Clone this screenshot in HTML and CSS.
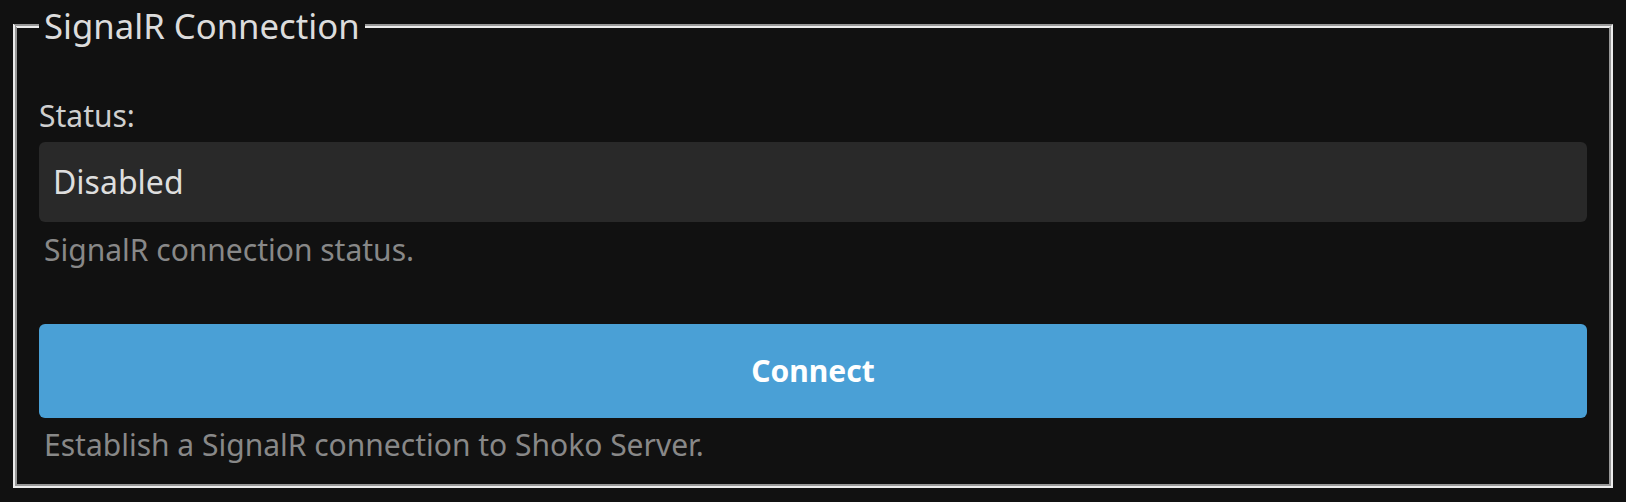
FILE: index.html
```html
<!DOCTYPE html>
<html lang="en">
<head>
<meta charset="utf-8">
<title>SignalR Connection</title>
<link rel="stylesheet" href="styles.css">
</head>
<body>
<fieldset class="panel">
  <legend class="panel-title">SignalR Connection</legend>
  <div class="field">
    <label class="field-label">Status:</label>
    <div class="field-value">Disabled</div>
    <div class="field-help">SignalR connection status.</div>
  </div>
  <div class="field field-action">
    <button class="btn-primary" type="button">Connect</button>
    <div class="field-help">Establish a SignalR connection to Shoko Server.</div>
  </div>
</fieldset>
</body>
</html>
```

FILE: styles.css
```css
html, body {
  margin: 0;
  background: #111111;
}
body {
  padding: 2px 13px 14px 13px;
  font-family: "Noto Sans", sans-serif;
  color: #dcdcdc;
}
.panel {
  margin: 0;
  border: 4px groove #ececec;
  border-left-style: ridge;
  padding: 45.5px 22px 19px 22px;
  min-width: 0;
}
.panel-title {
  font-size: 34.7px;
  padding: 0 5px;
  margin-left: 0;
  color: #dcdcdc;
  line-height: normal;
}
.field {
  display: flex;
  flex-direction: column;
}
.field-label {
  font-size: 30px;
  line-height: normal;
  color: #cfcfcf;
  margin-bottom: 6px;
}
.field-value {
  background: #292929;
  border-radius: 6px;
  height: 80px;
  display: flex;
  align-items: center;
  padding: 0 14px;
  font-size: 32px;
  color: #dedede;
}
.field-help {
  font-size: 30px;
  line-height: normal;
  color: #888888;
  padding-left: 5px;
  margin-top: 7px;
}
.field-action {
  margin-top: 54px;
}
.btn-primary {
  height: 94px;
  border: none;
  border-radius: 6px;
  background: #4aa0d6;
  color: #ffffff;
  font-family: "Noto Sans", sans-serif;
  font-weight: 700;
  font-size: 30px;
  cursor: pointer;
}
.field-action .field-help {
  margin-top: 6px;
}
```
